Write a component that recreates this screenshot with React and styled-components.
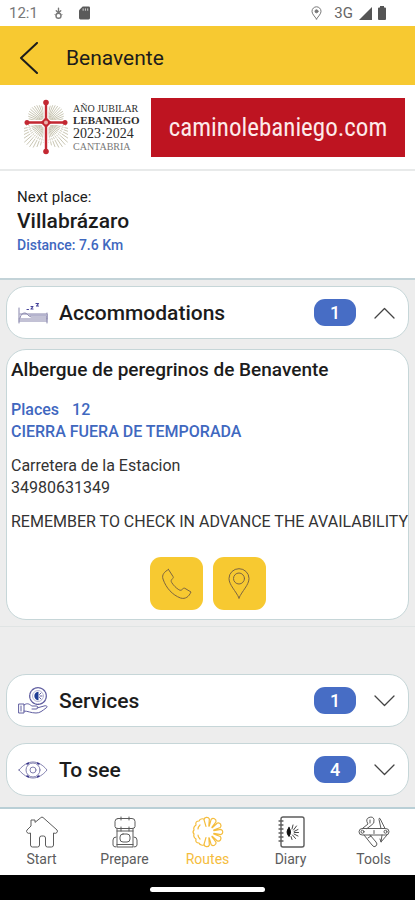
import React, { useState } from 'react';
import styled, { createGlobalStyle } from 'styled-components';

const GlobalStyle = createGlobalStyle`
  * {
    box-sizing: border-box;
  }

  body {
    margin: 0;
    background: #ededed;
    color: #1c1c1c;
    font-family: Roboto, "Liberation Sans", sans-serif;
  }

  h1, h2, h3, p {
    margin: 0;
  }

  button {
    font-family: inherit;
    color: inherit;
    cursor: pointer;
  }
`;

const Screen = styled.div`
  display: flex;
  flex-direction: column;
  min-height: 100vh;
`;

const StatusBar = styled.div`
  display: flex;
  align-items: center;
  justify-content: space-between;
  height: 26px;
  padding: 0 29px 0 9px;
  background: #fff;
  color: #777;
  font-size: 15px;
`;

const StatusGroup = styled.div`
  display: flex;
  align-items: center;
  gap: ${(props) => props.$gap}px;
`;

const Network = styled.span`
  margin-left: 6px;
  color: #666;
`;

const Header = styled.header`
  display: flex;
  align-items: center;
  gap: 26px;
  height: 59px;
  padding: 4px 19px 0;
  background: #f7c931;
`;

const BackButton = styled.button`
  display: flex;
  padding: 0;
  border: none;
  background: none;
`;

const PageTitle = styled.h1`
  font-size: 21px;
  font-weight: 400;
  line-height: 28px;
`;

const Banner = styled.div`
  display: flex;
  align-items: center;
  height: 86px;
  padding: 0 10px 0 24px;
  background: #fff;
  border-bottom: 2px solid #e8eaea;
`;

const LogoText = styled.div`
  display: flex;
  flex-direction: column;
  width: 66px;
  margin: 0 12px 0 5px;
  font-family: "Liberation Serif", serif;
  white-space: nowrap;
`;

const LogoLine = styled.span`
  font-size: ${(props) => props.$size}px;
  line-height: ${(props) => props.$size + 1}px;
  font-weight: ${(props) => (props.$bold ? 700 : 400)};
  color: ${(props) => (props.$soft ? '#777' : '#2b2b2b')};
`;

const BannerLink = styled.a`
  display: flex;
  flex: 1;
  align-items: center;
  justify-content: center;
  height: 59px;
  background: #be1421;
  color: #fdeaea;
  font-family: "Roboto Condensed", "Liberation Sans Narrow", Roboto, sans-serif;
  font-size: 25px;
  text-decoration: none;
`;

const NextPlace = styled.section`
  height: 109px;
  padding: 16px 17px;
  background: #fff;
  border-bottom: 2px solid #c3d3d8;
`;

const NextLabel = styled.p`
  font-size: 15px;
  line-height: 20px;
`;

const Distance = styled.p`
  color: #3f68bf;
  font-size: 14px;
  font-weight: 500;
  line-height: 20px;
`;

const PlaceName = styled.h2`
  font-size: 21px;
  font-weight: 500;
  line-height: 28px;
`;

const Main = styled.main`
  flex: 1;
  padding-bottom: 11px;
`;

const Section = styled.section`
  padding: ${(props) => (props.$open ? '6px 6px' : '0 6px')};
  border-bottom: ${(props) => (props.$open ? '1px solid #e0e4e4' : 'none')};
  margin-bottom: ${(props) => (props.$open ? 47 : 16)}px;

  &:last-child {
    margin-bottom: 0;
  }
`;

const SectionButton = styled.button`
  display: flex;
  align-items: center;
  width: 100%;
  height: 53px;
  padding: 0 13px 0 11px;
  border: 1px solid #c6d6d8;
  border-radius: 20px;
  background: #fff;
  text-align: left;
`;

const SectionTitle = styled.span`
  flex: 1;
  margin-left: 11px;
  font-size: 21px;
  font-weight: 500;
`;

const Badge = styled.span`
  display: flex;
  align-items: center;
  justify-content: center;
  width: 42px;
  height: 27px;
  margin-right: 18px;
  border-radius: 11px;
  background: #476dc5;
  color: #fff;
  font-size: 18px;
  font-weight: 500;
`;

const Card = styled.article`
  display: flex;
  flex-direction: column;
  gap: 12px;
  margin-top: 10px;
  padding: 9px 4px;
  border: 1px solid #c6d6d8;
  border-radius: 20px;
  background: #fff;
  line-height: 22px;
  font-size: 16px;
`;

const CardTitle = styled.h3`
  margin-bottom: 6px;
  font-size: 19px;
  font-weight: 500;
  line-height: 22px;
`;

const CardText = styled.div`
  color: ${(props) => (props.$blue ? '#3f68bf' : '#333')};
  font-weight: ${(props) => (props.$blue ? 500 : 400)};
  white-space: nowrap;
`;

const Places = styled.p`
  display: flex;
  gap: 13px;
`;

const Actions = styled.div`
  display: flex;
  justify-content: center;
  gap: 10px;
  margin-top: 12px;
`;

const ActionButton = styled.a`
  display: flex;
  align-items: center;
  justify-content: center;
  width: 53px;
  height: 53px;
  border-radius: 11px;
  background: #f7c931;
  color: #7d6540;
`;

const TabBar = styled.nav`
  display: grid;
  grid-template-columns: repeat(5, 1fr);
  height: 68px;
  padding-top: 7px;
  background: #fff;
  border-top: 2px solid #b9cfd6;
`;

const Tab = styled.a`
  display: flex;
  flex-direction: column;
  align-items: center;
  gap: 2px;
  color: ${(props) => (props.$active ? '#f5bd3d' : '#5c5c5c')};
  font-size: 14px;
  line-height: 18px;
  text-decoration: none;
`;

const HomeBar = styled.div`
  display: flex;
  align-items: center;
  justify-content: center;
  height: 25px;
  padding-top: 4px;
  background: #000;
`;

const HomePill = styled.div`
  width: 115px;
  height: 5px;
  border-radius: 3px;
  background: #fff;
`;

const stroke = {
  fill: 'none',
  stroke: 'currentColor',
  strokeLinecap: 'round',
  strokeLinejoin: 'round',
  'aria-hidden': true,
};

const polar = (cx, cy, r, deg) => {
  const a = (deg * Math.PI) / 180;
  return [cx + r * Math.cos(a), cy + r * Math.sin(a)];
};

const DownloadIcon = () => (
  <svg width="9" height="13" viewBox="0 0 10 14" {...stroke}>
    <path d="M5 1v5M2.500 4 5 6.500 7.500 4" strokeWidth="1.500" />
    <circle cx="5" cy="9.500" r="2.800" strokeWidth="1.500" />
    <path d="M1 8l1 1M9 8 8 9" />
  </svg>
);

const SdCardIcon = () => (
  <svg width="11" height="14" viewBox="0 0 12 14" aria-hidden="true">
    <path d="M4 0h6.500Q12 0 12 1.500v11Q12 14 10.500 14h-9Q0 14 0 12.500V4z" fill="#5a5a5a" />
    <path d="M4.500 2v2.500M7 2v2.500M9.500 2v2.500" stroke="#ddd" />
  </svg>
);

const StatusPinIcon = () => (
  <svg width="11" height="14" viewBox="0 0 11 14" {...stroke}>
    <path d="M5.500 13C3.500 10 1 8 1 5.300a4.500 4.500 0 0 1 9 0C10 8 7.500 10 5.500 13z" />
    <circle cx="5.500" cy="5.300" r="1.500" fill="currentColor" />
  </svg>
);

const SignalIcon = () => (
  <svg width="13" height="13" viewBox="0 0 13 13" aria-hidden="true">
    <path d="M13 0v13H0z" fill="#555" />
  </svg>
);

const BatteryIcon = () => (
  <svg width="8" height="14" viewBox="0 0 8 14" aria-hidden="true">
    <path d="M2 0h4v1.500h1q1 0 1 1V13q0 1-1 1H1q-1 0-1-1V2.500q0-1 1-1h1z" fill="#555" />
  </svg>
);

const BackIcon = () => (
  <svg width="21" height="32" viewBox="0 0 21 32" {...stroke}>
    <path d="M18 1 2 16l16 15" strokeWidth="2" />
  </svg>
);

const CrossLogo = () => (
  <svg width="44" height="56" viewBox="0 0 44 56" role="img" aria-label="Año Jubilar Lebaniego">
    {Array.from({ length: 52 }, (_, i) => {
      const deg = (i * 360) / 52;
      const rad = (deg * Math.PI) / 180;
      const tilt = Math.abs(Math.sin(2 * rad));
      const reach = Math.sin(rad) > 0 ? 17 + 13 * tilt : 15 + 6 * tilt;
      const [x1, y1] = polar(22, 24, 5, deg);
      const [x2, y2] = polar(22, 24, reach, deg);
      return (
        <line
          key={deg}
          x1={x1}
          y1={y1}
          x2={x2}
          y2={y2}
          stroke="#c3bfaa"
          strokeWidth="0.900"
          strokeDasharray={Math.sin(rad) > 0 ? '10 1 2 1' : 'none'}
        />
      );
    })}
    <path d="M22 4v49M3 23.500h38" stroke="#fff" strokeWidth="5" />
    <path d="M22 3v50M2 23.500h40" stroke="#c32832" strokeWidth="2.400" />
    <g fill="#c32832">
      <circle cx="22" cy="3.500" r="2.800" />
      <circle cx="22" cy="52.500" r="2.800" />
      <circle cx="3" cy="23.500" r="2.500" />
      <circle cx="41" cy="23.500" r="2.500" />
      <path d="m22 18 5.500 5.500L22 29l-5.500-5.500z" />
    </g>
    <circle cx="22" cy="23.500" r="2" fill="#e9b1a9" />
  </svg>
);

const BedIcon = () => (
  <svg width="30" height="24" viewBox="0 0 30 24" {...stroke} stroke="#8684ab">
    <path d="M1 7v15M29 12v10M1 18h28M1 20h28M2 13h27v5" />
    <path d="M2 17c1-4 3-5 5-5s3 3 6 4h15" />
    <path d="M12 14h16" strokeWidth="2" stroke="#b4b3cd" />
    <path d="M9 8.500h1.500M13 5.500h2l-2 2.500h2M18 2.500h2.500L18.500 5h2" stroke="#45429a" strokeWidth="1.200" />
  </svg>
);

const ServicesIcon = () => (
  <svg width="30" height="28" viewBox="0 0 30 28" {...stroke} stroke="#605ea0">
    <circle cx="20" cy="9" r="8.300" strokeDasharray="3 1" strokeWidth="1.300" />
    <circle cx="20" cy="9" r="5.500" stroke="#b9b8d6" />
    <path d="M20.500 4.800a4.200 4.200 0 0 0 0 8.400z" fill="#1f3d94" stroke="none" />
    <path d="M21.500 7.500l1.500-1.500M22 9h2M21.500 10.500l1.500 1.500" />
    <path d="M1 17h5v9H1zM3 19v5" />
    <path d="M6 18c4-3 6 0 8 1h4c3 0 2 3 0 3h-4M19 21l7-2c3-1 4 1 2 2-4 3-6 5-10 5-5 0-8-2-12-2" />
  </svg>
);

const EyeIcon = () => (
  <svg width="30" height="20" viewBox="0 0 30 20" {...stroke} stroke="#8381b0">
    <path d="M1 10c4-5 9-8 14-8s10 3 14 8c-4 5-9 8-14 8S5 15 1 10z" />
    <circle cx="15" cy="10" r="7" />
    <circle cx="15" cy="10" r="3" />
    <path d="M9 4l1.500-.8M19.500 3.200 21 4M9 16l1.500.8M19.500 16.800 21 16" stroke="#35328a" strokeWidth="1.500" />
  </svg>
);

const Chevron = ({ up }) => (
  <svg width="21" height="12" viewBox="0 0 21 12" {...stroke} stroke="#444">
    <path d={up ? 'M1 11 10.500 1.500 20 11' : 'M1 1l9.500 9.500L20 1'} strokeWidth="1.300" />
  </svg>
);

const PhoneIcon = () => (
  <svg width="31" height="31" viewBox="0 0 31 31" {...stroke}>
    <path d="M7.500 1.500 12 8.500c.6 1 .3 1.600-.5 2.200-1.500 1.200-1.700 2.500-.7 4 2 3 4.200 5.200 7 7 1.500 1 2.800.7 4-.8.6-.8 1.300-1 2.200-.5l6 3.600c-2 4.500-5.500 7.500-10.500 6C11.500 27 5 20 2 11 .5 7 3.500 3.500 7.500 1.500z" />
  </svg>
);

const PinIcon = () => (
  <svg width="22" height="31" viewBox="0 0 22 31" {...stroke}>
    <path d="M11 30C8 23 1 17 1 10.500a10 9.800 0 0 1 20 0C21 17 14 23 11 30z" />
    <circle cx="11" cy="10.500" r="5.500" />
  </svg>
);

const StartIcon = () => (
  <svg width="32" height="32" viewBox="0 0 32 32" {...stroke}>
    <path d="M15 1.500q1-1 2 0l14 12.500q1 1 0 2.500-1.500 1.500-3.500.5V29q0 2-2 2h-4q-2 0-2-2v-7q0-2-2-2h-2q-2 0-2 2v7q0 2-2 2h-5q-2 0-2-2V17q-2 1-3.500-.5-1-1 0-2.500l4-4V4h4v2z" />
  </svg>
);

const PrepareIcon = () => (
  <svg width="32" height="32" viewBox="0 0 32 32" {...stroke}>
    <path d="M12 4V1M20 4V1M9 2.500h14q3 0 3 3v5q0 2-3 2H9q-3 0-3-2v-5q0-3 3-3z" />
    <path d="M8 12.500V31h16V12.500M12 11v4M20 11v4M8 15h16M8 28.500h16M7 21q-3 0-3 3v5q0 2 3 2M25 21q3 0 3 3v5q0 2-3 2" />
    <rect x="11" y="18" width="10" height="8" rx="3" />
  </svg>
);

// scallop shell: open petals on the right, closed ribs on the left
const RoutesIcon = () => {
  const angles = [-96, -64, -32, 0, 32, 64, 96];
  const petals = angles
    .map((deg, i) => {
      const [ax, ay] = polar(16, 16, 6, deg - 14);
      const [bx, by] = polar(16, 16, 13, deg - 12);
      const [cx, cy] = polar(16, 16, 13, deg + 12);
      const [dx, dy] = polar(16, 16, 6, deg + 14);
      return `${i ? 'L' : 'M'}${ax} ${ay}L${bx} ${by}A2.800 2.800 0 0 1 ${cx} ${cy}L${dx} ${dy}`;
    })
    .join('');
  return (
    <svg width="32" height="32" viewBox="0 0 32 32" {...stroke} strokeWidth="1.200">
      <path d={petals} />
      <path d="M12 3Q8 2 7 5 3 5 4 9q-3 2-2 5-2 2 0 4-1 3 2 5-1 4 3 4 1 3 5 2" />
      <path d="M8 9q-2 2-2 4M6 19q0 2 2 4" />
    </svg>
  );
};

const DiaryIcon = () => (
  <svg width="32" height="32" viewBox="0 0 32 32" {...stroke}>
    <rect x="6" y="1" width="23" height="30" rx="2" strokeWidth="1.400" />
    <path d="M4 5h4M4 9h4M4 13h4M4 17h4M4 21h4M4 25h4" strokeWidth="1.300" />
    <path d="M14 11.500q-4 4.500 0 9 3-4.500 0-9z" fill="#111" stroke="#111" />
    <path d="m17 13 1-4M18.500 14l3-4M19 15.500l4-2M19.500 16.500h4M19 18l4 2M17.500 19l3 3.500M16 20.500l1 3" stroke="#444" />
  </svg>
);

const ToolsIcon = () => (
  <svg width="32" height="32" viewBox="0 0 32 32" {...stroke}>
    <rect x="1" y="12.500" width="30" height="6.500" rx="3.250" />
    <circle cx="4.500" cy="15.750" r="1.500" />
    <circle cx="27.500" cy="15.750" r="1.500" />
    <path d="M16 14.500v3M5 12 10 8Q7 3 11 1.500q4-1.500 5 2 1 4-3 6l-4 3M12 4v3" />
    <path d="M27 12.500 22 2.500q-1-1-1 1l2 9M6 19l8 10q2 3 4 1t0-4l-6-7M10 22l3-2M24 19l-1 7 6-7M23 26l-1-3" />
  </svg>
);

const services = [
  {
    id: 'accommodations',
    title: 'Accommodations',
    count: 1,
    Icon: BedIcon,
    places: [
      {
        name: 'Albergue de peregrinos de Benavente',
        places: 12,
        notice: 'CIERRA FUERA DE TEMPORADA',
        address: 'Carretera de la Estacion',
        phone: '34980631349',
      },
    ],
  },
  { id: 'services', title: 'Services', count: 1, Icon: ServicesIcon, places: [] },
  { id: 'to-see', title: 'To see', count: 4, Icon: EyeIcon, places: [] },
];

const tabs = [
  { label: 'Start', Icon: StartIcon },
  { label: 'Prepare', Icon: PrepareIcon },
  { label: 'Routes', Icon: RoutesIcon, active: true },
  { label: 'Diary', Icon: DiaryIcon },
  { label: 'Tools', Icon: ToolsIcon },
];

const PlaceCard = ({ place }) => (
  <Card>
    <CardTitle>{place.name}</CardTitle>
    <CardText $blue>
      <Places>
        <span>Places</span>
        <span>{place.places}</span>
      </Places>
      <p>{place.notice}</p>
    </CardText>
    <CardText>
      <p>{place.address}</p>
      <p>{place.phone}</p>
    </CardText>
    <CardText>
      <p>REMEMBER TO CHECK IN ADVANCE THE AVAILABILITY</p>
    </CardText>
    <Actions>
      <ActionButton href={`tel:${place.phone}`} aria-label="Call">
        <PhoneIcon />
      </ActionButton>
      <ActionButton href="#map" aria-label="Show on map">
        <PinIcon />
      </ActionButton>
    </Actions>
  </Card>
);

const App = () => {
  const [openId, setOpenId] = useState('accommodations');

  return (
    <Screen>
      <GlobalStyle />
      <StatusBar>
        <StatusGroup $gap={16}>
          <span>12:1</span>
          <DownloadIcon />
          <SdCardIcon />
        </StatusGroup>
        <StatusGroup $gap={6}>
          <StatusPinIcon />
          <Network>3G</Network>
          <SignalIcon />
          <BatteryIcon />
        </StatusGroup>
      </StatusBar>

      <Header>
        <BackButton aria-label="Back">
          <BackIcon />
        </BackButton>
        <PageTitle>Benavente</PageTitle>
      </Header>

      <Banner>
        <CrossLogo />
        <LogoText>
          <LogoLine $size={10}>AÑO JUBILAR</LogoLine>
          <LogoLine $size={11} $bold>LEBANIEGO</LogoLine>
          <LogoLine $size={14}>2023·2024</LogoLine>
          <LogoLine $size={10} $soft>CANTABRIA</LogoLine>
        </LogoText>
        <BannerLink href="#caminolebaniego">caminolebaniego.com</BannerLink>
      </Banner>

      <NextPlace>
        <NextLabel>Next place:</NextLabel>
        <PlaceName>Villabrázaro</PlaceName>
        <Distance>Distance: 7.6 Km</Distance>
      </NextPlace>

      <Main>
        {services.map(({ id, title, count, Icon, places }) => {
          const open = openId === id;
          return (
            <Section key={id} $open={open}>
              <h2>
                <SectionButton aria-expanded={open} onClick={() => setOpenId(open ? null : id)}>
                  <Icon />
                  <SectionTitle>{title}</SectionTitle>
                  <Badge>{count}</Badge>
                  <Chevron up={open} />
                </SectionButton>
              </h2>
              {open && places.map((place) => <PlaceCard key={place.name} place={place} />)}
            </Section>
          );
        })}
      </Main>

      <TabBar>
        {tabs.map(({ label, Icon, active }) => (
          <Tab key={label} href={`#${label.toLowerCase()}`} $active={active}>
            <Icon />
            {label}
          </Tab>
        ))}
      </TabBar>
      <HomeBar>
        <HomePill />
      </HomeBar>
    </Screen>
  );
};

export default App;
